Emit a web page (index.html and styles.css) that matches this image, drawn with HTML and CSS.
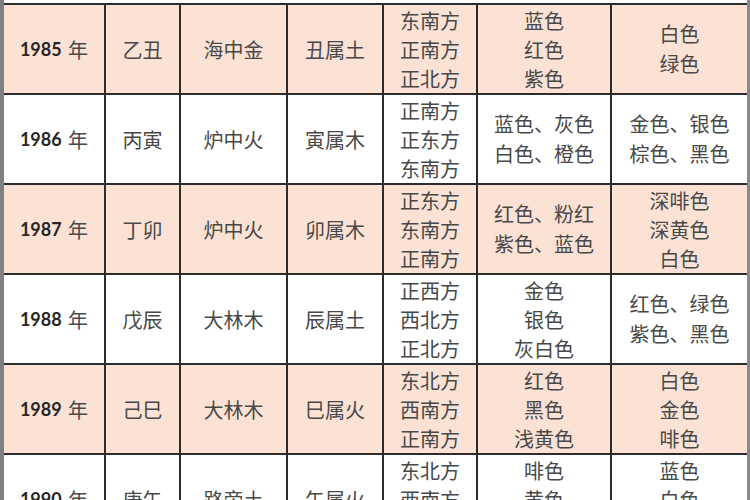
FILE: index.html
```html
<!DOCTYPE html>
<html lang="zh">
<head>
<meta charset="utf-8">
<title>五行方位颜色</title>
<link rel="stylesheet" href="styles.css">
</head>
<body>
<div class="frame">
  <div class="top-strip"></div>
  <div class="grid">
    <div class="cell peach year">1985 <span class="nian">年</span></div>
    <div class="cell peach">乙丑</div>
    <div class="cell peach">海中金</div>
    <div class="cell peach">丑属土</div>
    <div class="cell peach lines3">东南方<br>正南方<br>正北方</div>
    <div class="cell peach lines3">蓝色<br>红色<br>紫色</div>
    <div class="cell peach lines2">白色<br>绿色</div>

    <div class="cell year">1986 <span class="nian">年</span></div>
    <div class="cell">丙寅</div>
    <div class="cell">炉中火</div>
    <div class="cell">寅属木</div>
    <div class="cell lines3">正南方<br>正东方<br>东南方</div>
    <div class="cell lines2">蓝色、灰色<br>白色、橙色</div>
    <div class="cell lines2">金色、银色<br>棕色、黑色</div>

    <div class="cell peach year">1987 <span class="nian">年</span></div>
    <div class="cell peach">丁卯</div>
    <div class="cell peach">炉中火</div>
    <div class="cell peach">卯属木</div>
    <div class="cell peach lines3">正东方<br>东南方<br>正南方</div>
    <div class="cell peach lines2">红色、粉红<br>紫色、蓝色</div>
    <div class="cell peach lines3">深啡色<br>深黄色<br>白色</div>

    <div class="cell year">1988 <span class="nian">年</span></div>
    <div class="cell">戊辰</div>
    <div class="cell">大林木</div>
    <div class="cell">辰属土</div>
    <div class="cell lines3">正西方<br>西北方<br>正北方</div>
    <div class="cell lines3">金色<br>银色<br>灰白色</div>
    <div class="cell lines2">红色、绿色<br>紫色、黑色</div>

    <div class="cell peach year">1989 <span class="nian">年</span></div>
    <div class="cell peach">己巳</div>
    <div class="cell peach">大林木</div>
    <div class="cell peach">巳属火</div>
    <div class="cell peach lines3">东北方<br>西南方<br>正南方</div>
    <div class="cell peach lines3">红色<br>黑色<br>浅黄色</div>
    <div class="cell peach lines3">白色<br>金色<br>啡色</div>

    <div class="cell year">1990 <span class="nian">年</span></div>
    <div class="cell">庚午</div>
    <div class="cell">路旁土</div>
    <div class="cell">午属火</div>
    <div class="cell lines3">东北方<br>西南方<br>正南方</div>
    <div class="cell lines3">啡色<br>黄色<br>白色</div>
    <div class="cell lines3">蓝色<br>白色<br>绿色</div>
  </div>
</div>
</body>
</html>
```

FILE: styles.css
```css
html, body {
  margin: 0;
  padding: 0;
  background: #ffffff;
  overflow: hidden;
}

.frame {
  width: 750px;
  height: 500px;
  box-sizing: border-box;
  border-left: 4px solid #808080;
  border-right: 3px solid #8a8a8a;
  overflow: hidden;
  background: #ffffff;
}

.top-strip {
  height: 3px;
  background: #ffffff;
}

.grid {
  display: grid;
  grid-template-columns: 100px 73px 105px 94px 92px 132px 135px;
  grid-auto-rows: 88px;
  column-gap: 2px;
  row-gap: 2px;
  padding-top: 2px;
  background: #2c2c2c;
}

.cell {
  background: #ffffff;
  display: flex;
  align-items: center;
  justify-content: center;
  text-align: center;
  font-family: "Noto Sans CJK SC", "Noto Sans", sans-serif;
  font-size: 20px;
  color: #484848;
  line-height: 29px;
}

.peach {
  background: #fbe2d5;
}

.lines2 {
  line-height: 30px;
}

.lines3 {
  line-height: 29px;
}

.year {
  font-family: Lato, "Noto Sans CJK SC", sans-serif;
  font-weight: 700;
  font-size: 18px;
  color: #262626;
  white-space: pre;
}

.nian {
  font-family: "Noto Sans CJK SC", sans-serif;
  font-weight: 400;
  font-size: 20px;
  color: #4a4a4a;
  margin-left: 2px;
}
```
